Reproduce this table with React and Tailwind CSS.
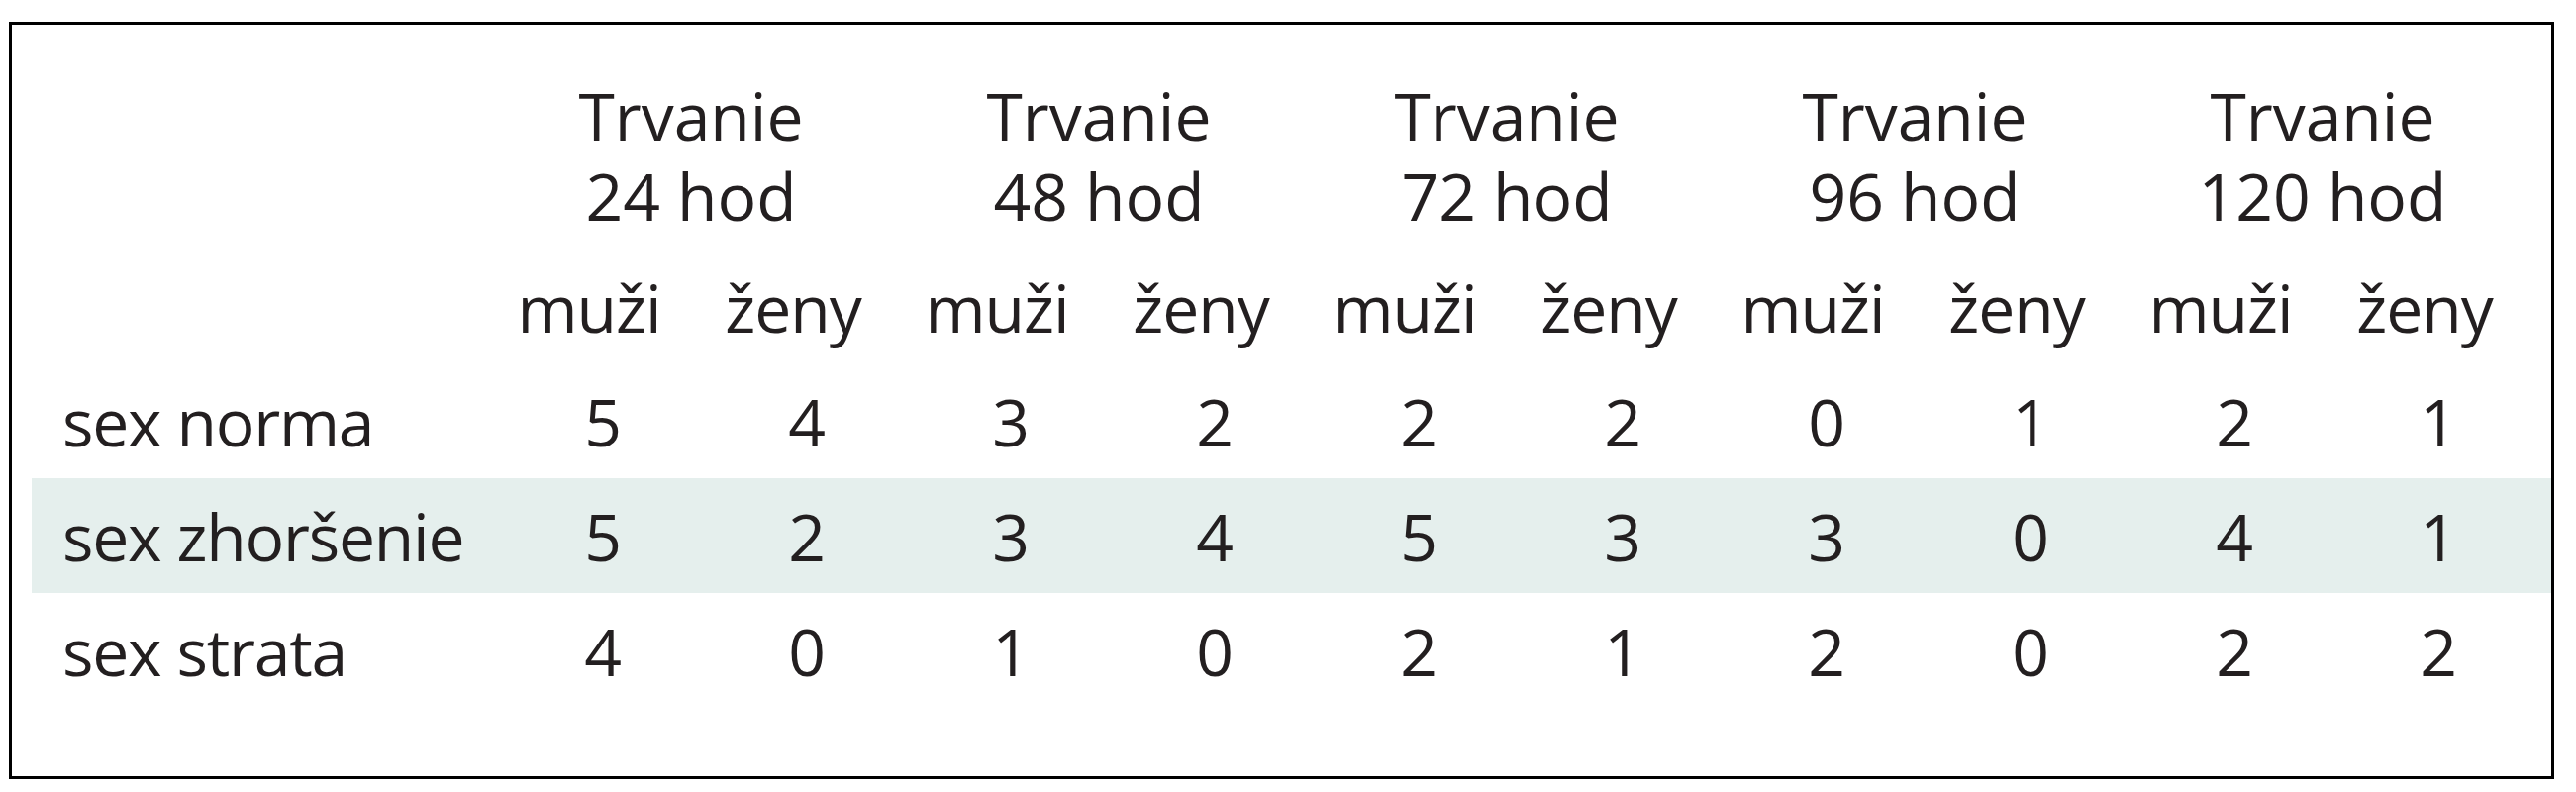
import React from "react";

const groups = ["24", "48", "72", "96", "120"];
const rows = [
  { label: "sex norma", vals: [5, 4, 3, 2, 2, 2, 0, 1, 2, 1], shaded: false },
  { label: "sex zhoršenie", vals: [5, 2, 3, 4, 5, 3, 3, 0, 4, 1], shaded: true },
  { label: "sex strata", vals: [4, 0, 1, 0, 2, 1, 2, 0, 2, 2], shaded: false },
];

export default function App() {
  return (
    <div className="w-[2602px] h-[800px] bg-white pt-[22px] pl-[9px] font-['Open_Sans',sans-serif] text-[66px] text-[#231f20]">
      <div className="w-[2571px] h-[765px] border-[3px] border-black pl-[20px] pt-[51px]">
        <div className="grid grid-cols-[460px_repeat(10,206px)]">
          <div />
          {groups.map((g) => (
            <div key={g} className="col-span-2 text-center leading-[81px] whitespace-pre-line">
              {`Trvanie\n${g} hod`}
            </div>
          ))}
        </div>
        <div className="grid grid-cols-[460px_repeat(10,206px)] mt-[16px] h-[113px] leading-[113px] tracking-[-1px]">
          <div />
          {groups.map((g) => (
            <React.Fragment key={g}>
              <div className="text-center">muži</div>
              <div className="text-center">ženy</div>
            </React.Fragment>
          ))}
        </div>
        {rows.map((r) => (
          <div
            key={r.label}
            className={`grid grid-cols-[460px_repeat(10,206px)] h-[116px] leading-[116px] ${r.shaded ? "bg-[#e5efed]" : ""}`}
          >
            <div className="pl-[31px] whitespace-nowrap tracking-[-1.2px]">{r.label}</div>
            {r.vals.map((v, i) => (
              <div key={i} className="text-center pl-[28px]">
                {v}
              </div>
            ))}
          </div>
        ))}
      </div>
    </div>
  );
}
